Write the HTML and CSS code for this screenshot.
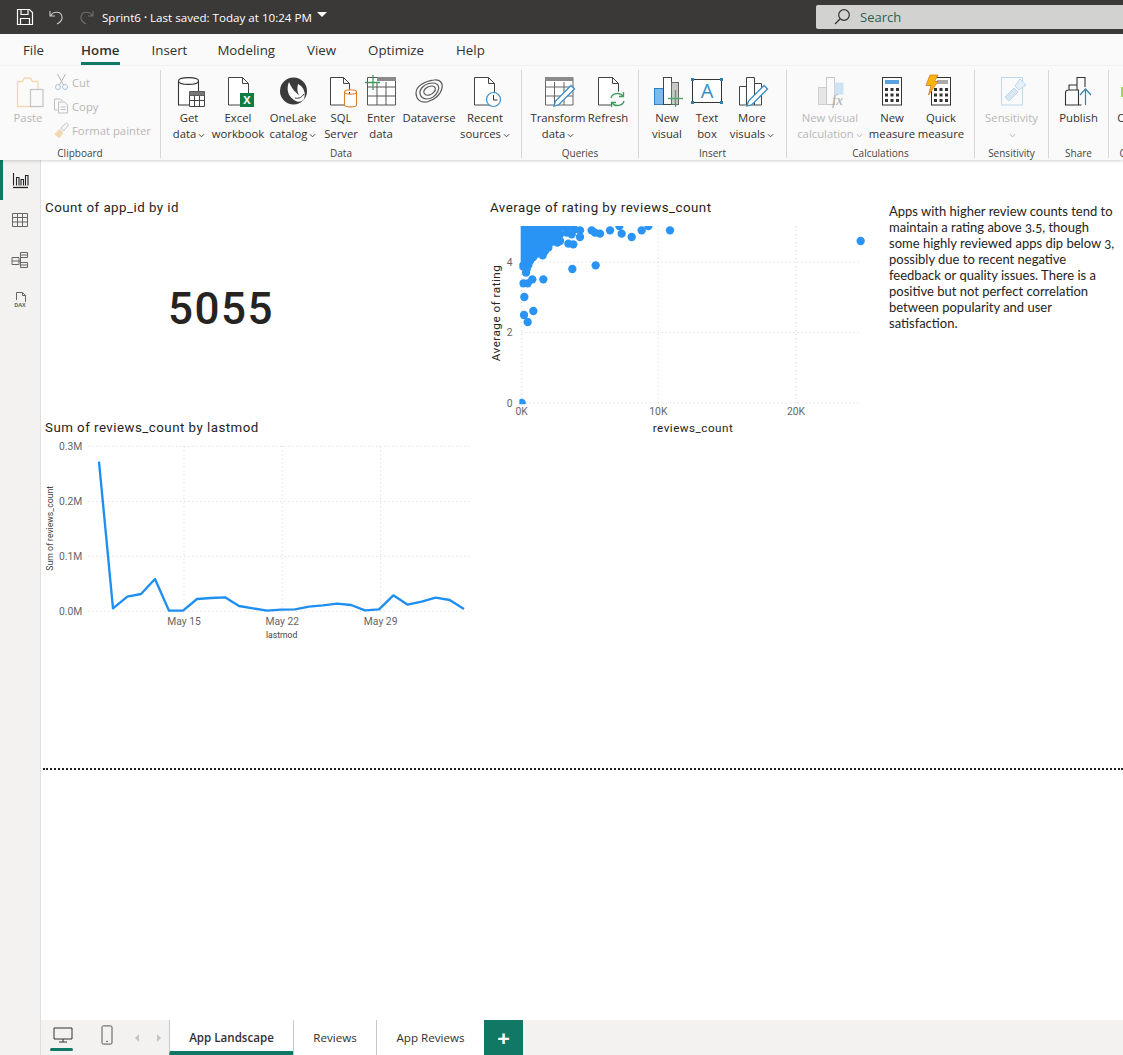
FILE: index.html
```html
<!DOCTYPE html>
<html lang="en">
<head>
<meta charset="utf-8">
<title>Sprint6</title>
<link rel="stylesheet" href="styles.css">
</head>
<body>
<header class="titlebar">
  <div class="qat">
    <svg class="qat-icon" viewBox="0 0 18 18"><path d="M1.500 1.500h12l3 3v12h-15z M5 1.500v5h7v-5 M4.500 16.500v-6h9v6" fill="none" stroke="#fff" stroke-width="1.200"/></svg>
    <svg class="qat-icon" viewBox="0 0 18 18"><path d="M3 3v5h5 M3.500 8C6 3 14 3 15 8.500c.6 3.500-2 6-5 7.500" fill="none" stroke="#c8c8c8" stroke-width="1.100"/></svg>
    <svg class="qat-icon" viewBox="0 0 18 18"><path d="M15 3v5h-5 M14.500 8C12 3 4 3 3 8.500c-.6 3.500 2 6 5 7.500" fill="none" stroke="#6e6e6e" stroke-width="1.100"/></svg>
  </div>
  <div class="doc-title">Sprint6 <span class="dot">•</span> Last saved: Today at 10:24 PM</div>
  <span class="caret"></span>
  <div class="search">
    <svg class="search-icon" viewBox="0 0 18 18"><circle cx="11" cy="7" r="5.300" fill="none" stroke="#333" stroke-width="1.200"/><path d="M7 11l-5 5" stroke="#333" stroke-width="1.300"/></svg>
    <span>Search</span>
  </div>
</header>

<nav class="tabs">
  <span class="tab tab-file">File</span>
  <span class="tab tab-active">Home</span>
  <span class="tab tab-insert">Insert</span>
  <span class="tab">Modeling</span>
  <span class="tab">View</span>
  <span class="tab">Optimize</span>
  <span class="tab">Help</span>
</nav>

<section class="ribbon">
  <div class="group g-clip">
    <div class="clip-items">
      <div class="btn btn-paste off">
        <svg class="ico" viewBox="0 0 36 36"><path d="M7.500 7.500h5l2-3.500h6l2 3.500h5.500v25h-20.500z" fill="none" stroke="#f2d9b0" stroke-width="1.300"/><rect x="20.500" y="15.500" width="12.500" height="17" fill="#fafafa" stroke="#c4c4c4" stroke-width="1.200"/></svg>
        <span class="lbl">Paste</span>
      </div>
      <div class="clip-list off">
        <div class="clip-row">
          <svg class="mini" viewBox="0 0 16 18"><path d="M4 1l6 11M12 1L6 12" stroke="#b4b4b4" fill="none"/><circle cx="4.500" cy="14" r="2.500" fill="none" stroke="#a9c6de"/><circle cx="11.500" cy="14" r="2.500" fill="none" stroke="#a9c6de"/></svg>
          <span>Cut</span>
        </div>
        <div class="clip-row">
          <svg class="mini" viewBox="0 0 16 18"><path d="M1 2h6l2 2M1 2v11h3" fill="none" stroke="#c0c0c0"/><path d="M5 5h6l3 3v8H5z M7 10h5M7 12.500h5" fill="#fafafa" stroke="#c0c0c0"/></svg>
          <span>Copy</span>
        </div>
        <div class="clip-row">
          <svg class="mini" viewBox="0 0 16 18"><path d="M1 13l5-5 4 4-4 5c-2-1-4-2-5-4z" fill="#f2d9b0"/><path d="M7 7l6-5 2 2-5 6z" fill="none" stroke="#c0c0c0"/></svg>
          <span>Format painter</span>
        </div>
      </div>
    </div>
    <div class="group-label">Clipboard</div>
  </div>

  <div class="group g-data">
    <div class="items cols-data">
      <div class="btn">
        <svg class="ico" viewBox="0 0 36 36"><path d="M7.500 7c0-4.500 20-4.500 20 0v24h-20z M7.500 7c0 4.500 20 4.500 20 0" fill="#fff" stroke="#333" stroke-width="1.100"/><path d="M18.500 17.500h15v15h-15z M18.500 21.500h15M18.500 26.500h15M23.500 21.500v11M28.500 21.500v11" fill="#fff" stroke="#444" stroke-width="1"/><rect x="18.500" y="17.500" width="15" height="4" fill="#777"/></svg>
        <span class="lbl">Get</span><span class="lbl">data<svg class="chev" viewBox="0 0 8 5"><path d="M1 1l3 3 3-3" fill="none" stroke="#333"/></svg></span>
      </div>
      <div class="btn">
        <svg class="ico" viewBox="0 0 36 36"><path d="M8.500 3.500h14l6 6v21.500h-20z M22.500 3.500v6h6" fill="#fff" stroke="#444" stroke-width="1"/><rect x="20" y="19" width="14" height="14" fill="#107c41"/><text x="27" y="30" class="xl">X</text></svg>
        <span class="lbl">Excel</span><span class="lbl">workbook</span>
      </div>
      <div class="btn">
        <svg class="ico" viewBox="0 0 36 36"><circle cx="18.500" cy="17" r="13.500" fill="#3a3a3a"/><path d="M14 8c-3 7-1 14 5 18 4 3 8 2 10-1 2-6 0-12-6-15-1 4-1 8 1 11-3-2-7-6-10-13z" fill="#fafafa"/><path d="M20 24c4 1 7-1 9-4" stroke="#3a3a3a" fill="none"/></svg>
        <span class="lbl">OneLake</span><span class="lbl">catalog<svg class="chev" viewBox="0 0 8 5"><path d="M1 1l3 3 3-3" fill="none" stroke="#333"/></svg></span>
      </div>
      <div class="btn">
        <svg class="ico" viewBox="0 0 36 36"><path d="M7.500 3.500h13l6 6v21.500h-19z M20.500 3.500v6h6" fill="#fff" stroke="#444" stroke-width="1"/><path d="M21.500 18c0-3 12-3 12 0v13c0 2.500-12 2.500-12 0z M21.500 18c0 3 12 3 12 0" fill="#fff" stroke="#d9822b" stroke-width="1.100"/></svg>
        <span class="lbl">SQL</span><span class="lbl">Server</span>
      </div>
      <div class="btn">
        <svg class="ico" viewBox="0 0 36 36"><path d="M4.500 3.500h28v27.500h-28z M4.500 13h28M4.500 22h28M14 8v23M23 8v23" fill="#fff" stroke="#555" stroke-width="1"/><rect x="14" y="3" width="19" height="4" fill="#8a8a8a"/><path d="M10 1v15M2 8.500h15" stroke="#3f9b5c" stroke-width="1.300"/></svg>
        <span class="lbl">Enter</span><span class="lbl">data</span>
      </div>
      <div class="btn">
        <svg class="ico" viewBox="0 0 36 36"><g fill="none" stroke="#5a5a5a" stroke-width="1.200"><path d="M5 19c0-7 9-12 18-13 6-1 9 3 8 8-1 6-7 12-15 14-7 1-11-3-11-9z"/><path d="M9 20c-1-6 6-11 13-11 5 0 7 4 5 8-2 5-7 8-11 8-3 0-6-2-7-5z"/><path d="M13 19c-1-4 4-7 8-7 4 0 4 4 2 6-2 3-8 5-10 1z"/></g></svg>
        <span class="lbl">Dataverse</span>
      </div>
      <div class="btn">
        <svg class="ico" viewBox="0 0 36 36"><path d="M7.500 3.500h14l6 6v21.500h-20z M21.500 3.500v6h6" fill="#fff" stroke="#444" stroke-width="1"/><circle cx="26.500" cy="25.500" r="7" fill="#fff" stroke="#3a8cc6" stroke-width="1.200"/><path d="M26.500 21v5h4" fill="none" stroke="#333"/></svg>
        <span class="lbl">Recent</span><span class="lbl">sources<svg class="chev" viewBox="0 0 8 5"><path d="M1 1l3 3 3-3" fill="none" stroke="#333"/></svg></span>
      </div>
    </div>
    <div class="group-label">Data</div>
  </div>

  <div class="group g-queries">
    <div class="items cols-queries">
      <div class="btn">
        <svg class="ico" viewBox="0 0 36 36"><path d="M5.500 3.500h27.500v27.500H5.500z M5.500 13h27.500M5.500 22h27.500M14.500 8v23M24 8v23" fill="#fff" stroke="#666" stroke-width="1"/><rect x="5" y="3" width="28" height="4" fill="#8a8a8a"/><path d="M14 32l1.500-5L31 11.500l3.500 3.500L19 30.500z" fill="#fff" stroke="#3a8cc6" stroke-width="1.300"/></svg>
        <span class="lbl">Transform</span><span class="lbl">data<svg class="chev" viewBox="0 0 8 5"><path d="M1 1l3 3 3-3" fill="none" stroke="#333"/></svg></span>
      </div>
      <div class="btn">
        <svg class="ico" viewBox="0 0 36 36"><path d="M8.500 3.500h14l6 6v21.500h-20z M22.500 3.500v6h6" fill="#fff" stroke="#444" stroke-width="1"/><circle cx="27.500" cy="25.500" r="8" fill="#fafafa"/><path d="M21 24c1-5 9-6 12-2M34 27c-1 5-9 6-12 2 M33.500 18v4.500h-4.500 M21.500 33v-4.500h4.500" fill="none" stroke="#3f9b5c" stroke-width="1.300"/></svg>
        <span class="lbl">Refresh</span>
      </div>
    </div>
    <div class="group-label">Queries</div>
  </div>

  <div class="group g-insert">
    <div class="items cols-insert">
      <div class="btn">
        <svg class="ico" viewBox="0 0 36 36"><rect x="5.500" y="14.500" width="9" height="16" fill="#7cb9ee" stroke="#2f7fc2"/><rect x="14.500" y="3.500" width="8" height="27" fill="#fff" stroke="#444"/><rect x="22.500" y="8.500" width="7" height="22" fill="#c8c8c8" stroke="#666"/><path d="M26.500 16v17M19 24.500h15" stroke="#4fa76a" stroke-width="1.400"/></svg>
        <span class="lbl">New</span><span class="lbl">visual</span>
      </div>
      <div class="btn">
        <svg class="ico" viewBox="0 0 36 36"><rect x="3.500" y="5.500" width="29" height="23" fill="#fff" stroke="#333"/><g fill="#2f7fa8"><rect x="2" y="4" width="3" height="3"/><rect x="31" y="4" width="3" height="3"/><rect x="2" y="27" width="3" height="3"/><rect x="31" y="27" width="3" height="3"/></g><text x="18" y="24" class="glyph-a">A</text></svg>
        <span class="lbl">Text</span><span class="lbl">box</span>
      </div>
      <div class="btn">
        <svg class="ico" viewBox="0 0 36 36"><path d="M5.500 12.500h7v18.500h-7z M12.500 3.500h8v27.500h-8z M20.500 9.500h7v21.500h-7z" fill="#fff" stroke="#444"/><path d="M13 32l1.500-5L30 11.500l3.500 3.500L18 30.500z" fill="#fff" stroke="#3a8cc6" stroke-width="1.300"/></svg>
        <span class="lbl">More</span><span class="lbl">visuals<svg class="chev" viewBox="0 0 8 5"><path d="M1 1l3 3 3-3" fill="none" stroke="#333"/></svg></span>
      </div>
    </div>
    <div class="group-label">Insert</div>
  </div>

  <div class="group g-calc">
    <div class="items cols-calc">
      <div class="btn off">
        <svg class="ico" viewBox="0 0 36 36"><rect x="6.500" y="13.500" width="8" height="17" fill="#e6e6e6" stroke="#d0d0d0"/><rect x="14.500" y="3.500" width="8" height="27" fill="#fafafa" stroke="#c8c8c8"/><rect x="22.500" y="8.500" width="9" height="12" fill="#cfe3f4"/><text x="20" y="31" class="glyph-fx">fx</text></svg>
        <span class="lbl">New visual</span><span class="lbl">calculation<svg class="chev" viewBox="0 0 8 5"><path d="M1 1l3 3 3-3" fill="none" stroke="#aaa"/></svg></span>
      </div>
      <div class="btn">
        <svg class="ico" viewBox="0 0 36 36"><rect x="8.500" y="3.500" width="19" height="27.500" fill="#fff" stroke="#333"/><rect x="11" y="6" width="14" height="4" fill="#5aa3e0"/><g fill="#333"><rect x="11" y="14" width="3" height="3"/><rect x="16.500" y="14" width="3" height="3"/><rect x="22" y="14" width="3" height="3"/><rect x="11" y="19.500" width="3" height="3"/><rect x="16.500" y="19.500" width="3" height="3"/><rect x="22" y="19.500" width="3" height="3"/><rect x="11" y="25" width="3" height="3"/><rect x="16.500" y="25" width="3" height="3"/><rect x="22" y="25" width="3" height="3"/></g></svg>
        <span class="lbl">New</span><span class="lbl">measure</span>
      </div>
      <div class="btn">
        <svg class="ico" viewBox="0 0 36 36"><rect x="8.500" y="3.500" width="19" height="27.500" fill="#fff" stroke="#333"/><rect x="14" y="6" width="11" height="4" fill="#aaa"/><g fill="#333"><rect x="11" y="14" width="3" height="3"/><rect x="16.500" y="14" width="3" height="3"/><rect x="22" y="14" width="3" height="3"/><rect x="11" y="19.500" width="3" height="3"/><rect x="16.500" y="19.500" width="3" height="3"/><rect x="22" y="19.500" width="3" height="3"/><rect x="11" y="25" width="3" height="3"/><rect x="16.500" y="25" width="3" height="3"/><rect x="22" y="25" width="3" height="3"/></g><path d="M7 1h8l-3.500 6.500H15L5.500 21 8 11.500H3z" fill="#f7b50c" stroke="#d9781e" stroke-width=".8"/></svg>
        <span class="lbl">Quick</span><span class="lbl">measure</span>
      </div>
    </div>
    <div class="group-label">Calculations</div>
  </div>

  <div class="group g-sens">
    <div class="items cols-one">
      <div class="btn off">
        <svg class="ico" viewBox="0 0 36 36"><path d="M7.500 3.500h21v27.500h-21z" fill="#fafafa" stroke="#bcd6ea"/><path d="M11 23l9-9 4 4-9 9z" fill="#d8e8f3" stroke="#bcd6ea"/><path d="M21 12l5-7 6 6-7 5z" fill="#e4eff7" stroke="#bcd6ea"/></svg>
        <span class="lbl">Sensitivity</span><span class="lbl"><svg class="chev" viewBox="0 0 8 5"><path d="M1 1l3 3 3-3" fill="none" stroke="#aaa"/></svg></span>
      </div>
    </div>
    <div class="group-label">Sensitivity</div>
  </div>

  <div class="group g-share">
    <div class="items cols-one">
      <div class="btn">
        <svg class="ico" viewBox="0 0 36 36"><path d="M16 16V3.500h8V13 M8 16v-5h8 M4.500 31V19c0-2 1-3 3-3h10v15z M17.500 31h3" fill="none" stroke="#333" stroke-width="1.100"/><path d="M24.500 31V15M19 21l5.500-6 5.500 6" fill="none" stroke="#2f86b8" stroke-width="1.200"/></svg>
        <span class="lbl">Publish</span>
      </div>
    </div>
    <div class="group-label">Share</div>
  </div>

  <div class="group g-next">
    <div class="items cols-one">
      <div class="btn">
        <svg class="ico" viewBox="0 0 36 36"><path d="M4.500 13v10" fill="none" stroke="#a8d05a" stroke-width="3"/></svg>
        <span class="lbl">Copilot</span>
      </div>
    </div>
    <div class="group-label">Copilot</div>
  </div>
</section>

<div class="workspace">
  <aside class="sidebar">
    <div class="side-item side-active">
      <svg class="side-icon" viewBox="0 0 18 18"><path d="M2.500 2v12.500M5.500 14.500v-8h2.500v8M10 14.500v-6h2.500v6M14.500 14.500V4.500H17v10" fill="none" stroke="#222" stroke-width="1.100"/><path d="M2 16.500h15" stroke="#222" stroke-width="1.300"/></svg>
    </div>
    <div class="side-item">
      <svg class="side-icon" viewBox="0 0 18 18"><path d="M1.500 2.500h15v13h-15z M1.500 6.500h15M1.500 11h15M6.500 2.500v13M11.500 2.500v13" fill="none" stroke="#666"/></svg>
    </div>
    <div class="side-item">
      <svg class="side-icon" viewBox="0 0 18 18"><path d="M1 6.500h7v7H1z M9.500 1.500h7v5h-7z M9.500 11.500h7v5h-7z M1 10h7 M9.500 4h7M9.500 14h7 M8 10h1.500M9.500 4v10" fill="none" stroke="#666"/></svg>
    </div>
    <div class="side-item">
      <svg class="side-icon" viewBox="0 0 18 18"><path d="M5.500 9V1.500h6l3 3v6.500 M11.500 1.500v3h3" fill="none" stroke="#666"/><text x="9" y="15.500" class="dax">DAX</text></svg>
    </div>
  </aside>

  <div class="report">
    <main class="canvas">
      <div class="visual v-card">
        <h2 class="vtitle">Count of app_id by id</h2>
        <div class="card-value">5055</div>
      </div>

      <div class="visual v-scatter">
        <h2 class="vtitle">Average of rating by reviews_count</h2>
        <svg class="scatter" viewBox="0 78 1200 672">
          <defs><clipPath id="plot"><rect x="118" y="105" width="1040" height="535"/></clipPath></defs>
          <g class="grid">
            <path d="M125 213H1145M125 425H1145M125 636H1145M535 105V636M948 105V636M125 105V636"/>
          </g>
          <g clip-path="url(#plot)" class="dots">
            <path d="M122 105H250L245 150L205 172L190 192L160 197L150 218L140 245L122 235Z"/>
            <circle cx="570" cy="118" r="12.500"/><circle cx="1142" cy="150" r="12.500"/><circle cx="505" cy="105" r="12.500"/><circle cx="485" cy="118" r="12.500"/><circle cx="455" cy="138" r="12.500"/><circle cx="425" cy="128" r="12.500"/><circle cx="418" cy="105" r="12.500"/><circle cx="390" cy="118" r="12.500"/><circle cx="360" cy="128" r="12.500"/><circle cx="345" cy="125" r="12.500"/><circle cx="335" cy="118" r="12.500"/><circle cx="347" cy="223" r="12.500"/><circle cx="277" cy="234" r="12.500"/><circle cx="265" cy="158" r="12.500"/><circle cx="280" cy="160" r="12.500"/><circle cx="300" cy="138" r="12.500"/><circle cx="300" cy="118" r="12.500"/><circle cx="283" cy="115" r="12.500"/><circle cx="275" cy="130" r="12.500"/><circle cx="250" cy="105" r="12.500"/><circle cx="240" cy="150" r="12.500"/><circle cx="220" cy="150" r="12.500"/><circle cx="205" cy="170" r="12.500"/><circle cx="188" cy="193" r="12.500"/><circle cx="190" cy="265" r="12.500"/><circle cx="157" cy="265" r="12.500"/><circle cx="143" cy="277" r="12.500"/><circle cx="130" cy="277" r="12.500"/><circle cx="133" cy="318" r="12.500"/><circle cx="132" cy="372" r="12.500"/><circle cx="160" cy="360" r="12.500"/><circle cx="143" cy="393" r="12.500"/><circle cx="140" cy="235" r="12.500"/><circle cx="138" cy="245" r="12.500"/><circle cx="150" cy="210" r="12.500"/><circle cx="125" cy="636" r="12.500"/>
            <circle cx="260" cy="125" r="12.500"/><circle cx="240" cy="130" r="12.500"/><circle cx="268" cy="105" r="12.500"/><circle cx="232" cy="155" r="12.500"/><circle cx="195" cy="180" r="12.500"/><circle cx="172" cy="188" r="12.500"/><circle cx="160" cy="198" r="12.500"/><circle cx="145" cy="222" r="12.500"/><circle cx="128" cy="225" r="12.500"/>
          </g>
          <g class="tick">
            <text x="98" y="224" text-anchor="end">4</text><text x="98" y="436" text-anchor="end">2</text><text x="98" y="647" text-anchor="end">0</text>
            <text x="125" y="673" text-anchor="middle">0K</text><text x="535" y="673" text-anchor="middle">10K</text><text x="948" y="673" text-anchor="middle">20K</text>
          </g>
          <text class="axis" x="639" y="722" text-anchor="middle">reviews_count</text>
          <text class="axis" transform="translate(60 366) rotate(-90)" text-anchor="middle">Average of rating</text>
        </svg>
      </div>

      <div class="visual v-line">
        <h2 class="vtitle">Sum of reviews_count by lastmod</h2>
        <svg class="linechart" viewBox="0 66 1320 627">
          <g class="grid">
            <path d="M160 94H1310M160 259H1310M160 424H1310M160 589H1310M447 94V589M742 94V589M1037 94V589"/>
          </g>
          <polyline class="series" points="192,140 234,580 277,545 318,537 360,492 402,587 444,587 486,552 528,549 570,547 612,573 654,580 696,587 738,584 780,583 822,575 864,571 906,566 948,570 990,586 1032,583 1075,541 1118,569 1160,560 1202,548 1244,555 1287,582"/>
          <g class="tick">
            <text x="142" y="104" text-anchor="end">0.3M</text><text x="142" y="269" text-anchor="end">0.2M</text><text x="142" y="434" text-anchor="end">0.1M</text><text x="142" y="599" text-anchor="end">0.0M</text>
            <text x="447" y="630" text-anchor="middle">May 15</text><text x="742" y="630" text-anchor="middle">May 22</text><text x="1037" y="630" text-anchor="middle">May 29</text>
          </g>
          <text class="axis-sm" x="740" y="668" text-anchor="middle">lastmod</text>
          <text class="axis-sm" transform="translate(53 340) rotate(-90)" text-anchor="middle">Sum of reviews_count</text>
        </svg>
      </div>

      <div class="visual v-text">Apps with higher review counts tend to maintain a rating above 3.5, though some highly reviewed apps dip below 3, possibly due to recent negative feedback or quality issues. There is a positive but not perfect correlation between popularity and user satisfaction.</div>

      <div class="page-edge"></div>
    </main>

    <footer class="pagebar">
      <div class="viewbtn viewbtn-active">
        <svg class="view-icon" viewBox="0 0 20 18"><path d="M1 2h18v11H1z" fill="none" stroke="#333"/><path d="M10 13v3M6 16h8" stroke="#333"/></svg>
      </div>
      <div class="viewbtn">
        <svg class="view-icon" viewBox="0 0 20 22"><rect x="4.500" y="1" width="11" height="20" rx="1.500" fill="none" stroke="#444"/><path d="M9 18h2" stroke="#444"/></svg>
      </div>
      <div class="arrows">
        <span class="arrow-l"></span>
        <span class="arrow-r"></span>
      </div>
      <div class="ptab ptab-active w-land">App Landscape</div>
      <div class="ptab w-rev">Reviews</div>
      <div class="ptab w-app">App Reviews</div>
      <div class="ptab-add">+</div>
    </footer>
  </div>
</div>
</body>
</html>
```

FILE: styles.css
```css
* { box-sizing: border-box; }
html, body { margin: 0; height: 1055px; overflow: hidden; }
body {
  width: 1123px;
  font-family: "Open Sans", "Noto Sans", sans-serif;
  color: #252423;
  background: #fff;
  display: flex;
  flex-direction: column;
}

/* title bar */
.titlebar {
  height: 34px;
  background: #3a3938;
  display: flex;
  align-items: center;
  padding-left: 16px;
  color: #fff;
  flex: none;
}
.qat { display: flex; gap: 13px; align-items: center; }
.qat-icon { width: 18px; height: 18px; display: block; }
.doc-title { margin-left: 6px; font-size: 11.600px; white-space: nowrap; }
.dot { font-size: 8px; vertical-align: 2px; }
.caret {
  margin-left: 5px;
  margin-top: -5px;
  width: 0; height: 0;
  border-left: 5px solid transparent;
  border-right: 5px solid transparent;
  border-top: 5px solid #fff;
}
.search {
  margin-left: auto;
  width: 307px;
  height: 24px;
  background: #d2d2d0;
  border-radius: 2px 0 0 2px;
  display: flex;
  align-items: center;
  padding-left: 17px;
  gap: 9px;
  color: #2c5f55;
  font-size: 13px;
}
.search-icon { width: 18px; height: 18px; }

/* tabs */
.tabs {
  height: 32px;
  background: #fafafa;
  display: flex;
  padding-left: 23px;
  gap: 32px;
  flex: none;
}
.tab {
  position: relative;
  font-size: 13.300px;
  line-height: 32px;
  color: #323130;
}
.tab-file { margin-right: 5px; }
.tab-insert { margin-right: -2px; }
.tab-active { font-weight: 600; }
.tab-active::after {
  content: "";
  position: absolute;
  left: 0; right: 0;
  bottom: 1px;
  height: 3px;
  background: #117865;
}

/* ribbon */
.ribbon {
  height: 94px;
  flex: none;
  background: #fafafa;
  display: flex;
  padding-top: 4px;
  overflow: hidden;
  box-shadow: 0 1px 3px rgba(0,0,0,.18);
  position: relative;
  z-index: 2;
}
.group {
  height: 88px;
  display: flex;
  flex-direction: column;
  border-right: 1px solid #d8d8d8;
  flex: none;
}
.g-clip { width: 161px; }
.g-data { width: 361px; }
.g-queries { width: 117px; }
.g-insert { width: 148px; }
.g-calc { width: 188px; }
.g-sens { width: 74px; }
.g-share { width: 60px; }
.g-next { width: 54px; border-right: 0; }
.group-label {
  height: 10px;
  line-height: 10px;
  font-size: 10px;
  text-align: center;
  color: #444;
  white-space: nowrap;
}
.items { flex: 1; display: grid; padding-top: 4px; }
.cols-data { grid-template-columns: 56px 42px 68px 28px 52px 44px 68px; }
.cols-queries { grid-template-columns: 72px 28px; }
.cols-insert { grid-template-columns: 56px 24px 66px; }
.cols-calc { grid-template-columns: 86px 38px 60px; }
.cols-one { grid-template-columns: 1fr; }
.btn {
  display: flex;
  flex-direction: column;
  align-items: center;
  min-width: 0;
}
.ico { width: 36px; height: 36px; flex: none; display: block; }
.lbl {
  font-size: 11.300px;
  line-height: 16px;
  white-space: nowrap;
  color: #323130;
}
.chev { width: 7px; height: 5px; margin-left: 2px; vertical-align: 0; }
.off .lbl, .clip-list { color: #b9b7b5; }
.clip-items { flex: 1; display: flex; padding-top: 4px; }
.btn-paste { width: 50px; margin-left: 3px; }
.clip-list { margin-top: -4px; display: flex; flex-direction: column; font-size: 11.300px; white-space: nowrap; }
.clip-row { height: 24px; display: flex; align-items: center; gap: 2px; }
.mini { width: 17px; height: 18px; flex: none; }
.xl { font: 700 11px "Open Sans", sans-serif; fill: #fff; text-anchor: middle; }
.glyph-a { font: 400 20px "Open Sans", sans-serif; fill: #3a8cc6; text-anchor: middle; }
.glyph-fx { font: italic 15px "Liberation Serif", serif; fill: #aaa; }
.dax { font: 700 5.500px "Open Sans", sans-serif; fill: #666; text-anchor: middle; }

/* workspace */
.workspace { flex: 1; display: flex; min-height: 0; }
.sidebar {
  width: 41px;
  flex: none;
  background: #f3f2f1;
  border-right: 1px solid #e1dfdd;
}
.side-item {
  height: 40px;
  display: flex;
  align-items: center;
  justify-content: center;
  border-left: 3px solid transparent;
  padding-right: 3px;
}
.side-active { border-left-color: #117865; }
.side-icon { width: 18px; height: 18px; }
.report { flex: 1; display: flex; flex-direction: column; min-width: 0; }
.canvas { flex: 1; position: relative; background: #fff; overflow: hidden; }
.pagebar {
  height: 35px;
  flex: none;
  background: #f3f2f1;
  display: flex;
}

/* visuals on the report canvas */
.visual { position: absolute; }
.vtitle {
  margin: 0;
  height: 18px;
  font: 400 13.300px/18px Roboto, sans-serif;
  letter-spacing: .48px;
  color: #252423;
  white-space: nowrap;
}
.v-card { left: 4px; top: 39px; width: 352px; height: 200px; }
.card-value {
  margin-top: 65px;
  text-align: center;
  font: 500 44px/54px Roboto, sans-serif;
  letter-spacing: 1.500px;
  color: #252423;
}
.v-scatter { left: 439px; top: 39px; }
.v-scatter .vtitle { padding-left: 10px; }
.scatter { display: block; width: 400px; height: 224px; }
.v-line { left: -6px; top: 259px; }
.v-line .vtitle { padding-left: 10px; }
.linechart { display: block; width: 440px; height: 209px; }
.v-text {
  left: 848px;
  top: 43px;
  width: 232px;
  font: 400 13px/16px Lato, sans-serif;
  font-variant-numeric: oldstyle-nums;
  color: #252423;
}
.page-edge {
  position: absolute;
  left: 2px;
  right: 0;
  top: 608px;
  border-top: 2px dotted #222;
}

/* charts */
.grid path { fill: none; stroke: #d4d4d4; stroke-width: 3; stroke-dasharray: 3 9; }
.dots { fill: #2a94f5; }
.series { fill: none; stroke: #1e8ff0; stroke-width: 7; stroke-linejoin: round; }
.tick text { font: 400 31px Roboto, sans-serif; fill: #666; }
.axis { font: 400 35px Roboto, sans-serif; letter-spacing: 1.500px; fill: #252423; }
.axis-sm { font: 400 26px Roboto, sans-serif; fill: #444; }

/* page bar */
.viewbtn {
  width: 44px;
  display: flex;
  justify-content: center;
  padding-top: 5px;
  position: relative;
}
.view-icon { width: 20px; height: 20px; }
.viewbtn-active::after {
  content: "";
  position: absolute;
  left: 9px; right: 12px;
  top: 28px;
  height: 3px;
  border-radius: 2px;
  background: #117865;
}
.arrows { width: 40px; display: flex; justify-content: space-between; align-items: center; padding: 0 8px 0 6px; }
.arrow-l, .arrow-r { width: 0; height: 0; border-top: 4px solid transparent; border-bottom: 4px solid transparent; }
.arrow-l { border-right: 4px solid #c4c4c4; }
.arrow-r { border-left: 4px solid #c4c4c4; }
.ptab {
  background: #fff;
  font-size: 11.600px;
  display: flex;
  align-items: center;
  justify-content: center;
  border-left: 1px solid #c8c8c8;
  color: #323130;
}
.w-land { width: 124px; }
.w-rev { width: 83px; }
.w-app { width: 108px; }
.ptab-active { font-weight: 600; border-bottom: 4px solid #117865; padding-top: 4px; }
.ptab-add {
  width: 39px;
  background: #117865;
  color: #fff;
  font: 700 22px/34px "Open Sans", sans-serif;
  text-align: center;
}
```
